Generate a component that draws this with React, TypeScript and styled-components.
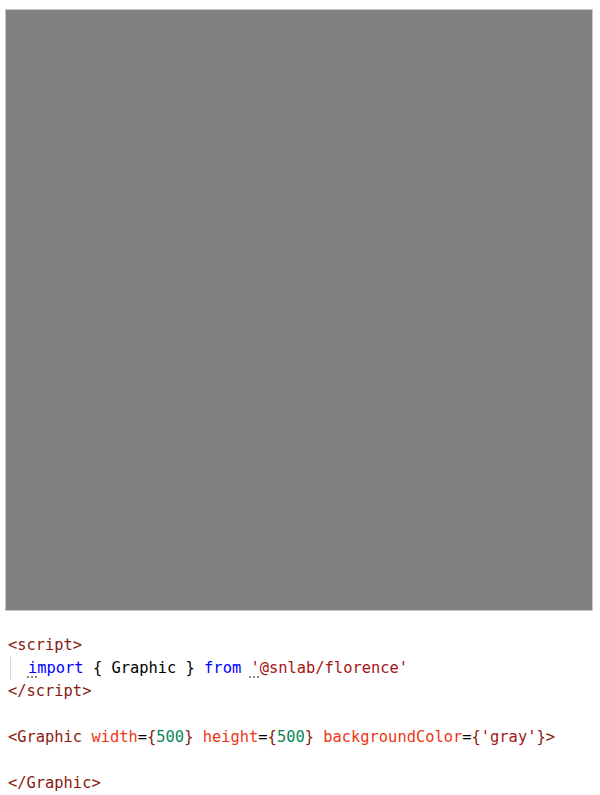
import React from "react";
import styled, { createGlobalStyle } from "styled-components";

const Global = createGlobalStyle`
  html, body { margin: 0; padding: 0; background: #ffffff; }
  body { width: 600px; height: 795px; overflow: hidden; }
`;

const Page = styled.div`
  display: flex;
  flex-direction: column;
  padding: 10px 0 0 6px;
`;

const Canvas = styled.div`
  width: 586px;
  height: 600px;
  background: #808080;
  box-shadow: 0 0 0 1px #c9c9c9;
`;

const Code = styled.pre`
  margin: 24px 0 0 0;
  padding: 0 0 0 2px;
  font-family: "DejaVu Sans Mono", "Liberation Mono", monospace;
  font-size: 15.4px;
  line-height: 23px;
  color: #000000;
  white-space: pre;
`;

const Line = styled.div`
  display: flex;
  height: 23px;
`;

const Guide = styled.span`
  display: inline-block;
  width: 18px;
  height: 23px;
  margin-left: 2px;
  border-left: 1px solid #d6d6d6;
  box-sizing: border-box;
`;

const Tag = styled.span`
  color: #881a0e;
`;
const Attr = styled.span`
  color: #f03414;
`;
const Num = styled.span`
  color: #098658;
`;
const Str = styled.span`
  color: #a31515;
`;
const Kw = styled.span`
  color: #0000ff;
`;
const Punct = styled.span`
  color: #000000;
`;

const Hint = styled.span`
  position: relative;
  &::after {
    content: "";
    position: absolute;
    left: -2px;
    bottom: -1px;
    width: 13px;
    height: 2px;
    background-image: radial-gradient(circle, #8a8a8a 0.9px, transparent 1.1px);
    background-size: 4px 2px;
    background-repeat: repeat-x;
  }
`;

export default function App() {
  return (
    <>
      <Global />
      <Page>
        <Canvas />
        <Code>
          <Line>
            <Tag>&lt;script&gt;</Tag>
          </Line>
          <Line>
            <Guide />
            <Kw>
              <Hint>i</Hint>mport
            </Kw>
            <Punct>{" { Graphic } "}</Punct>
            <Kw>from</Kw>
            <Punct> </Punct>
            <Str>
              <Hint>'</Hint>@snlab/florence'
            </Str>
          </Line>
          <Line>
            <Tag>&lt;/script&gt;</Tag>
          </Line>
          <Line />
          <Line>
            <Tag>&lt;Graphic</Tag>
            <Punct> </Punct>
            <Attr>width</Attr>
            <Punct>=</Punct>
            <Tag>{"{"}</Tag>
            <Num>500</Num>
            <Tag>{"}"}</Tag>
            <Punct> </Punct>
            <Attr>height</Attr>
            <Punct>=</Punct>
            <Tag>{"{"}</Tag>
            <Num>500</Num>
            <Tag>{"}"}</Tag>
            <Punct> </Punct>
            <Attr>backgroundColor</Attr>
            <Punct>=</Punct>
            <Tag>{"{"}</Tag>
            <Str>'gray'</Str>
            <Tag>{"}>"}</Tag>
          </Line>
          <Line />
          <Line>
            <Tag>&lt;/Graphic&gt;</Tag>
          </Line>
        </Code>
      </Page>
    </>
  );
}
